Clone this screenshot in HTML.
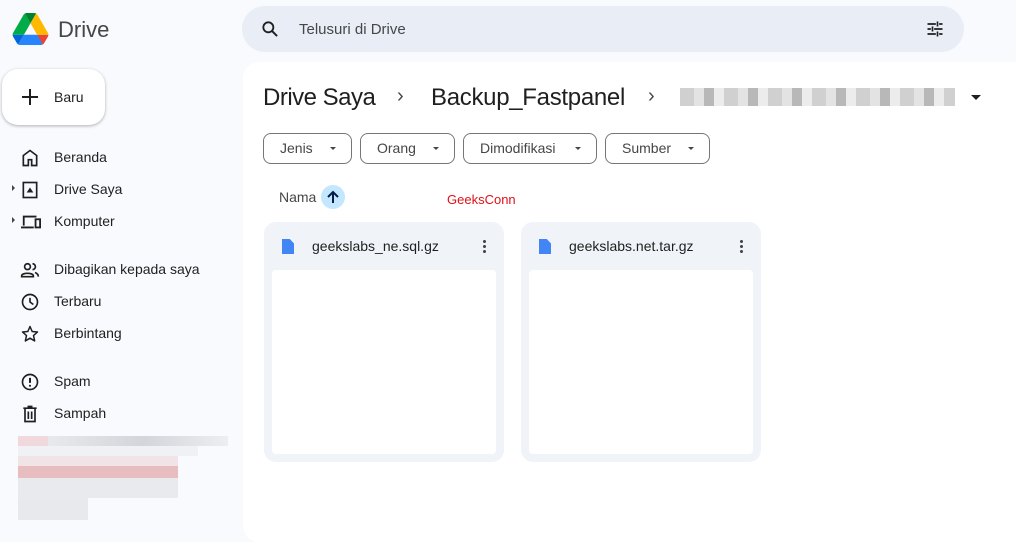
<!DOCTYPE html>
<html><head><meta charset="utf-8"><style>
*{margin:0;padding:0;box-sizing:border-box}
body{width:1016px;height:528px;overflow:hidden;background:#f8fafd;font-family:"Liberation Sans",sans-serif;color:#1f1f1f;position:relative}
.a{position:absolute}
.nav{position:absolute;left:54px;font-size:14px;color:#1f1f1f}
.ic{position:absolute;left:20px}
.chip{position:absolute;top:133px;height:31px;border:1px solid #747775;border-radius:8px;font-size:14px;color:#444746;line-height:29px;padding-left:16px}
.chip:after{content:"";position:absolute;right:15px;top:13px;border-left:3px solid transparent;border-right:3px solid transparent;border-top:3px solid #444746}
.card{position:absolute;top:222px;width:240px;height:240px;background:#f0f4f9;border-radius:12px}
.card .in{position:absolute;left:8px;top:48px;width:224px;height:184px;background:#fff;border-radius:4px}
.card .t{position:absolute;left:48px;top:16px;font-size:14px;color:#1f1f1f}
.card .d{position:absolute;left:18px;top:17px;width:12px;height:15px;background:#4285f4;clip-path:polygon(0 0,65% 0,100% 30%,100% 100%,0 100%)}
.card .m{position:absolute;right:18px;top:17px;width:3px;height:14px;background:radial-gradient(circle,#444746 1.4px,transparent 1.6px) 0 0/3px 5px}
.px{position:absolute;height:10px}
</style></head><body>
<svg class="a" style="left:12px;top:13px" width="37" height="32" viewBox="0 0 87.3 78">
<path d="m6.6 66.850 3.85 6.65c.8 1.4 1.950 2.5 3.3 3.3l13.75-23.8h-27.5c0 1.55.4 3.1 1.2 4.5z" fill="#0066da"/>
<path d="m43.65 25-13.75-23.8c-1.35.8-2.5 1.9-3.3 3.3l-25.4 44a9.06 9.06 0 0 0 -1.2 4.5h27.5z" fill="#00ac47"/>
<path d="m73.55 76.8c1.35-.8 2.5-1.9 3.3-3.3l1.6-2.75 7.65-13.25c.8-1.4 1.2-2.95 1.2-4.5h-27.502l5.852 11.5z" fill="#ea4335"/>
<path d="m43.65 25 13.75-23.8c-1.35-.8-2.9-1.2-4.5-1.2h-18.5c-1.6 0-3.15.45-4.5 1.2z" fill="#00832d"/>
<path d="m59.8 53h-32.3l-13.75 23.8c1.35.8 2.9 1.2 4.5 1.2h50.8c1.6 0 3.15-.45 4.5-1.2z" fill="#2684fc"/>
<path d="m73.4 26.5-12.7-22c-.8-1.4-1.950-2.5-3.3-3.3l-13.75 23.8 16.15 28h27.45c0-1.55-.4-3.1-1.2-4.5z" fill="#ffba00"/>
</svg>
<div class="a" style="left:58px;top:17px;font-size:22px;color:#444746">Drive</div>
<div class="a" style="left:2px;top:69px;width:103px;height:56px;background:#fff;border-radius:16px;box-shadow:0 1px 3px rgba(0,0,0,.3)"></div>
<svg class="a" style="left:21px;top:88px" width="18" height="18"><path d="M9 1v16M1 9h16" stroke="#1f1f1f" stroke-width="2"/></svg>
<div class="a" style="left:54px;top:89px;font-size:14px">Baru</div>
<svg class="ic" style="top:148px" width="20" height="20" viewBox="0 0 24 24"><path d="M4 21V9l8-6 8 6v12h-6v-7h-4v7z" fill="none" stroke="#1f1f1f" stroke-width="2"/></svg>
<div class="nav" style="top:149px">Beranda</div>
<div class="a" style="left:12px;top:185px;border-top:3px solid transparent;border-bottom:3px solid transparent;border-left:3px solid #444"></div>
<svg class="ic" style="top:180px" width="20" height="20" viewBox="0 0 24 24"><rect x="4" y="3" width="16" height="18" fill="none" stroke="#1f1f1f" stroke-width="2"/><path d="M8 15h8l-4-6z" fill="#1f1f1f"/></svg>
<div class="nav" style="top:181px">Drive Saya</div>
<div class="a" style="left:12px;top:217px;border-top:3px solid transparent;border-bottom:3px solid transparent;border-left:3px solid #444"></div>
<svg class="ic" style="top:212px" width="22" height="20" viewBox="0 0 24 22"><path d="M4 15V5h14M1 17h14" stroke="#1f1f1f" stroke-width="2" fill="none"/><rect x="17" y="8" width="5" height="9" fill="none" stroke="#1f1f1f" stroke-width="2"/></svg>
<div class="nav" style="top:213px">Komputer</div>
<svg class="ic" style="top:260px" width="20" height="20" viewBox="0 0 24 24"><circle cx="9" cy="8" r="3.5" fill="none" stroke="#1f1f1f" stroke-width="2"/><path d="M2 19c0-4 14-4 14 0v1H2z" fill="none" stroke="#1f1f1f" stroke-width="2"/><path d="M15 4.5a3.5 3.5 0 0 1 0 7M18 15c2 .8 4 2 4 5" fill="none" stroke="#1f1f1f" stroke-width="2"/></svg>
<div class="nav" style="top:261px">Dibagikan kepada saya</div>
<svg class="ic" style="top:292px" width="20" height="20" viewBox="0 0 24 24"><circle cx="12" cy="12" r="9" fill="none" stroke="#1f1f1f" stroke-width="2"/><path d="M12 7v5l4 3" fill="none" stroke="#1f1f1f" stroke-width="2"/></svg>
<div class="nav" style="top:293px">Terbaru</div>
<svg class="ic" style="top:324px" width="20" height="20" viewBox="0 0 24 24"><path d="M12 3l2.6 6 6.4.6-4.8 4.3 1.4 6.4L12 17l-5.6 3.3 1.4-6.4L3 9.6 9.4 9z" fill="none" stroke="#1f1f1f" stroke-width="1.8" stroke-linejoin="round"/></svg>
<div class="nav" style="top:325px">Berbintang</div>
<svg class="ic" style="top:372px" width="20" height="20" viewBox="0 0 24 24"><circle cx="12" cy="12" r="9" fill="none" stroke="#1f1f1f" stroke-width="2"/><path d="M12 7v6M12 15.5v2" stroke="#1f1f1f" stroke-width="2.4"/></svg>
<div class="nav" style="top:373px">Spam</div>
<svg class="ic" style="top:404px" width="20" height="20" viewBox="0 0 24 24"><path d="M4 5h16M9 3h6M6 5v16h12V5M10 9v9M14 9v9" fill="none" stroke="#1f1f1f" stroke-width="2"/></svg>
<div class="nav" style="top:405px">Sampah</div>
<div class="px" style="left:18px;top:436px;width:210px;background:linear-gradient(90deg,#f0d8dc 0 30px,#e8e9ec 30px,#d3d5da 60%,#eceef1)"></div>
<div class="px" style="left:18px;top:446px;width:180px;background:#f0f1f4"></div>
<div class="px" style="left:18px;top:456px;width:160px;height:10px;background:#f1e4e6"></div>
<div class="px" style="left:18px;top:466px;width:160px;height:12px;background:#e8bdbf"></div>
<div class="px" style="left:18px;top:478px;width:160px;height:20px;background:#e9eaed"></div>
<div class="px" style="left:18px;top:498px;width:70px;height:22px;background:#e8e9ec"></div>

<div class="a" style="left:242px;top:6px;width:722px;height:46px;background:#e9eef6;border-radius:23px"></div>
<svg class="a" style="left:260px;top:19px" width="20" height="20" viewBox="0 0 24 24"><circle cx="10" cy="10" r="6" fill="none" stroke="#1f1f1f" stroke-width="2.2"/><path d="M14.5 14.5l6 6" stroke="#1f1f1f" stroke-width="2.4"/></svg>
<div class="a" style="left:299px;top:21px;font-size:15px;color:#444746">Telusuri di Drive</div>
<svg class="a" style="left:925px;top:19px" width="20" height="20" viewBox="0 0 24 24"><path d="M3 6h10M17 6h4M15 3v6M3 12h4M11 12h10M9 9v6M3 18h10M17 18h4M15 15v6" stroke="#1f1f1f" stroke-width="2"/></svg>

<div class="a" style="left:243px;top:62px;width:790px;height:480px;background:#fff;border-radius:16px"></div>
<div class="a" style="left:263px;top:84px;font-size:24px;color:#1f1f1f;letter-spacing:-.5px">Drive Saya</div>
<div class="a" style="left:397px;top:85px;font-size:20px;color:#444746">›</div>
<div class="a" style="left:431px;top:84px;font-size:24px;color:#1f1f1f;letter-spacing:-.3px">Backup_Fastpanel</div>
<div class="a" style="left:648px;top:85px;font-size:20px;color:#444746">›</div>
<div class="a" style="left:680px;top:88px;width:275px;height:18px;background:repeating-linear-gradient(90deg,#d0d0d0 0 14px,#e3e3e3 14px 24px,#b8b8b8 24px 34px,#ececec 34px 44px)"></div>
<div class="a" style="left:971px;top:95px;border-left:5px solid transparent;border-right:5px solid transparent;border-top:5px solid #1f1f1f"></div>

<div class="chip" style="left:263px;width:89px">Jenis</div>
<div class="chip" style="left:360px;width:95px">Orang</div>
<div class="chip" style="left:463px;width:134px">Dimodifikasi</div>
<div class="chip" style="left:605px;width:105px">Sumber</div>

<div class="a" style="left:279px;top:189px;font-size:14px;color:#444746">Nama</div>
<div class="a" style="left:321px;top:185px;width:24px;height:24px;border-radius:50%;background:#c2e7ff"></div>
<svg class="a" style="left:325px;top:189px" width="16" height="16" viewBox="0 0 16 16"><path d="M8 14V3M3 8l5-5 5 5" stroke="#041e49" stroke-width="2" fill="none"/></svg>
<div class="a" style="left:447px;top:192px;font-size:13px;color:#e0101a">GeeksConn</div>

<div class="card" style="left:264px"><div class="d"></div><div class="t">geekslabs_ne.sql.gz</div><div class="m"></div><div class="in"></div></div>
<div class="card" style="left:521px"><div class="d"></div><div class="t">geekslabs.net.tar.gz</div><div class="m"></div><div class="in"></div></div>
</body></html>
